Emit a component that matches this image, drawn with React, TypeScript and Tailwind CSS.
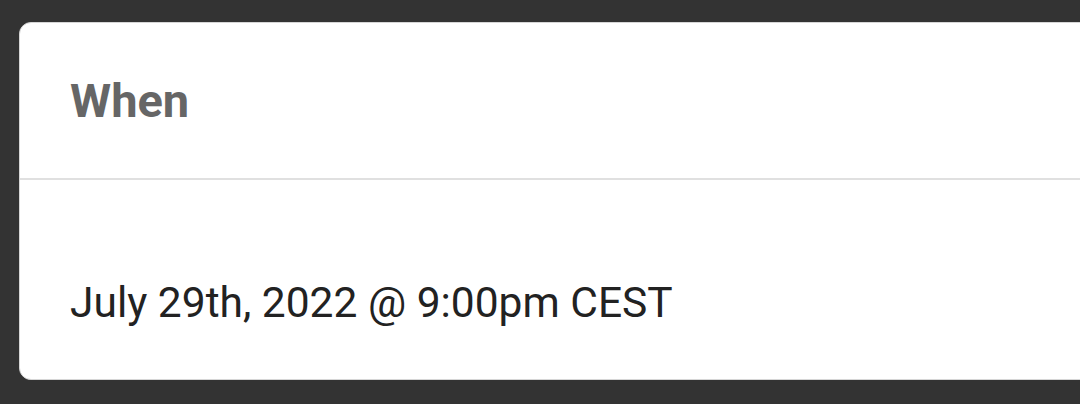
export default function App() {
  return (
    <div className="h-[404px] w-[1080px] overflow-hidden bg-[#333333] pl-[19px] pt-[22px]" style={{ fontFamily: 'Roboto, "Noto Sans", sans-serif' }}>
      <div className="w-[1120px] h-[358px] rounded-[12px] border border-[#d6d6d6] bg-white">
        <div className="h-[157px] border-b-2 border-[#e0e0e0] pl-[50px] pt-[54px]">
          <div className="text-[47px] leading-none font-bold text-[#666666]">When</div>
        </div>
        <div className="pl-[50px] pt-[102px]">
          <div className="text-[42.5px] leading-none text-[#222222]">July 29th, 2022 @ 9:00pm CEST</div>
        </div>
      </div>
    </div>
  );
}
